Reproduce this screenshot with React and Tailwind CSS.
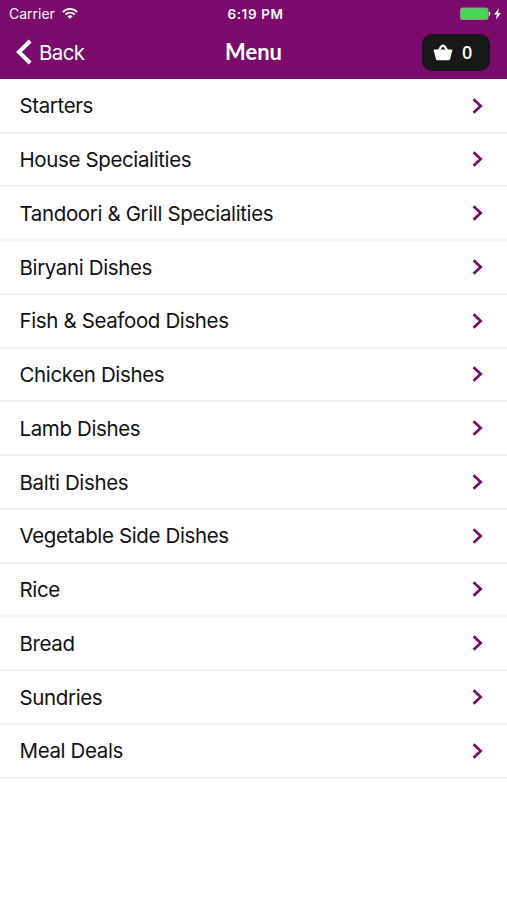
const categories = [
  'Starters',
  'House Specialities',
  'Tandoori & Grill Specialities',
  'Biryani Dishes',
  'Fish & Seafood Dishes',
  'Chicken Dishes',
  'Lamb Dishes',
  'Balti Dishes',
  'Vegetable Side Dishes',
  'Rice',
  'Bread',
  'Sundries',
  'Meal Deals',
];

function WifiIcon() {
  return (
    <svg width="16" height="12" viewBox="0 0 16 12" fill="none" stroke="currentColor" strokeWidth="1.8">
      <path d="M.9 4C5 -.2 11 -.2 15.1 4" />
      <path d="M3.4 6.5C6 4 10 4 12.6 6.5" />
      <path d="M8 10.8L5.4 8.2C6.9 6.9 9.1 6.9 10.6 8.2Z" fill="currentColor" stroke="none" />
    </svg>
  );
}

function BatteryIcon() {
  return (
    <svg width="41" height="14" viewBox="0 0 41 14">
      <rect x="0.5" y="1" width="27.5" height="11.5" rx="1.5" fill="#43d854" stroke="#a388a3" strokeWidth="1" />
      <path d="M28.8 4.5C30.9 5 30.9 8.5 28.8 9Z" fill="#f0dcf0" />
      <path d="M39 1.2L34 7.6H36.9L35.9 12.6L41 6.1H38Z" fill="#fff" />
    </svg>
  );
}

function BasketIcon() {
  return (
    <svg width="20" height="17" viewBox="0 0 20 17" fill="#fff">
      <path d="M5.8 6.5L8 3Q10 .4 12 3L14.2 6.5" fill="none" stroke="#fff" strokeWidth="2.3" />
      <path d="M1.3 5.5H18.7Q19.5 5.5 19.3 6.4L17 15.2Q16.7 16.2 15.7 16.2H4.3Q3.3 16.2 3 15.2L.7 6.4Q.5 5.5 1.3 5.5Z" />
    </svg>
  );
}

function StatusBar() {
  return (
    <div className="grid h-[27px] grid-cols-3 items-center pl-[9px] pr-[6px] text-[14px]">
      <div className="flex items-center gap-[7px]">
        <span>Carrier</span>
        <WifiIcon />
      </div>
      <div className="pl-[1px] pt-[1px] text-center text-[13.5px] font-semibold tracking-[0.6px] whitespace-nowrap">6:19 PM</div>
      <div className="flex justify-end">
        <BatteryIcon />
      </div>
    </div>
  );
}

function NavBar() {
  return (
    <div className="grid h-[50px] grid-cols-3 items-center pl-4 pr-[17px]">
      <button className="flex items-center gap-[6px] text-[20.5px] tracking-[-0.6px]">
        <svg width="17" height="26" viewBox="0 0 17 26" fill="none" stroke="#fff" strokeWidth="4">
          <path d="M14.2 2L2.9 13L14.2 24" />
        </svg>
        <span className="pt-[2px]">Back</span>
      </button>
      <h1 className="pb-[2px] pl-[1px] text-center font-['Lato',sans-serif] text-[22px] font-bold">Menu</h1>
      <button className="flex h-[37px] w-[68px] items-center justify-self-end gap-[9px] rounded-[10px] bg-[#171717] pl-[11px]">
        <BasketIcon />
        <span className="pt-[1px] font-['Open_Sans',sans-serif] text-[18px] font-semibold">0</span>
      </button>
    </div>
  );
}

export default function App() {
  return (
    <div className="min-h-screen bg-white font-['Inter',sans-serif]">
      <header className="h-[79px] bg-[#7a0a6b] text-white">
        <StatusBar />
        <NavBar />
      </header>
      <ul className="pt-[0.75px]">
        {categories.map((name) => (
          <li
            key={name}
            className="flex h-[53.75px] items-center justify-between border-b-2 border-[#f1f1f1] pl-[19.5px] pr-[24px] text-[20.5px] tracking-[-0.37px] text-[#111]"
          >
            <span className="pt-[2px]">{name}</span>
            <svg width="11" height="16" viewBox="0 0 11 16" fill="none" stroke="#7a0a6b" strokeWidth="2.7">
              <path d="M1.5 1.3L8.7 8L1.5 14.7" />
            </svg>
          </li>
        ))}
      </ul>
    </div>
  );
}
